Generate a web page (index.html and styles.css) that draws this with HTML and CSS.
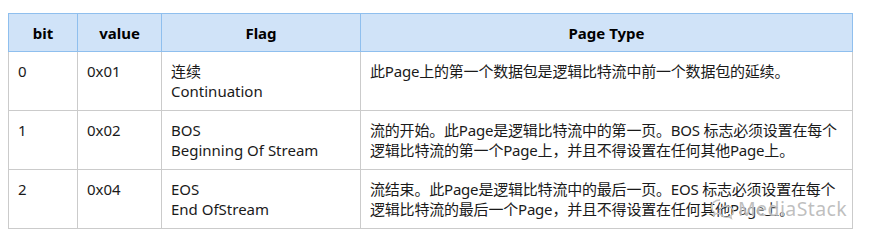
FILE: index.html
```html
<!DOCTYPE html>
<html lang="zh">
<head>
<meta charset="utf-8">
<link rel="stylesheet" href="styles.css">
</head>
<body>
<div class="wrap">
  <table class="spec">
    <colgroup>
      <col class="c-bit">
      <col class="c-val">
      <col class="c-flag">
      <col class="c-type">
    </colgroup>
    <thead>
      <tr><th>bit</th><th>value</th><th>Flag</th><th>Page Type</th></tr>
    </thead>
    <tbody>
      <tr>
        <td>0</td><td>0x01</td>
        <td>连续<br>Continuation</td>
        <td class="type">此Page上的第一个数据包是逻辑比特流中前一个数据包的延续。</td>
      </tr>
      <tr>
        <td>1</td><td>0x02</td>
        <td>BOS<br>Beginning Of Stream</td>
        <td class="type">流的开始。此Page是逻辑比特流中的第一页。BOS 标志必须设置在每个<br>逻辑比特流的第一个Page上，并且不得设置在任何其他Page上。</td>
      </tr>
      <tr>
        <td>2</td><td>0x04</td>
        <td>EOS<br>End OfStream</td>
        <td class="type">流结束。此Page是逻辑比特流中的最后一页。EOS 标志必须设置在每个<br>逻辑比特流的最后一个Page，并且不得设置在任何其他Page上。</td>
      </tr>
    </tbody>
  </table>
  <div class="watermark">
    <svg class="wm-icon" width="26" height="22" viewBox="0 0 26 22" aria-hidden="true">
      <path d="M10 2 C4.8 2 1.5 5.3 1.5 9 C1.5 11.2 2.7 13 4.5 14.3 L3.8 17 L7 15.4 C8 15.7 9 15.8 10 15.8" fill="none" stroke="#c4c4c4" stroke-width="1.4"/>
      <path d="M16.5 8 C12.6 8 9.8 10.6 9.8 13.6 C9.8 16.6 12.6 19.2 16.5 19.2 C17.3 19.2 18 19.1 18.7 18.9 L21.4 20.3 L20.8 17.9 C22.4 16.8 23.3 15.3 23.3 13.6 C23.3 10.6 20.4 8 16.5 8 Z" fill="none" stroke="#c4c4c4" stroke-width="1.4"/>
    </svg>
    <span class="wm-text">MediaStack</span>
  </div>
</div>
</body>
</html>
```
FILE: styles.css
```css
html, body {
  margin: 0;
  padding: 0;
  background: #ffffff;
}
body {
  padding: 13px 0 0 8px;
  font-family: "Noto Sans", "Noto Sans CJK SC", sans-serif;
  font-size: 15px;
  color: #1a1a1a;
}
.wrap {
  position: relative;
  width: 844px;
}
.spec {
  border-collapse: collapse;
  table-layout: fixed;
  width: 844px;
}
.c-bit { width: 69px; }
.c-val { width: 84px; }
.c-flag { width: 199px; }
.c-type { width: 492px; }
.spec th {
  background: #d0e3f8;
  border: 1px solid #8fbfee;
  font-weight: bold;
  color: #000;
  text-align: center;
  line-height: 20px;
  height: 38px;
  padding: 0 9px;
  box-sizing: border-box;
}
.spec td {
  border: 1px solid #cbcbcb;
  line-height: 20px;
  vertical-align: top;
  padding: 9px 9px 9px 9px;
  height: 59px;
  box-sizing: border-box;
  text-align: left;
}
.spec td.type {
  white-space: nowrap;
  letter-spacing: -0.2px;
}
.spec thead th {
  border-bottom: 1px solid #8fbfee;
}
.watermark {
  position: absolute;
  left: 702px;
  top: 182px;
  display: flex;
  align-items: center;
  gap: 2px;
  pointer-events: none;
}
.wm-text {
  font-family: "Noto Sans", sans-serif;
  font-size: 19.5px;
  color: rgba(180, 180, 180, 0.85);
  letter-spacing: 0.4px;
  text-shadow: 0 0 2px #fff;
}
.wm-icon {
  display: block;
}
```
